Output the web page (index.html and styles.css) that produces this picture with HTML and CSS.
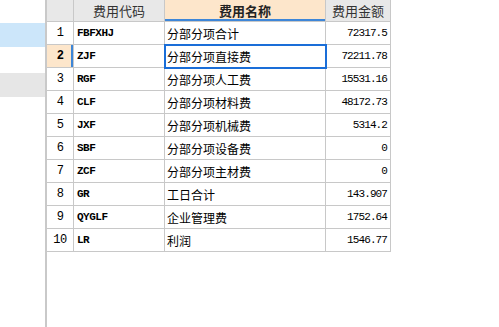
FILE: index.html
```html
<!DOCTYPE html>
<html>
<head>
<meta charset="utf-8">
<link rel="stylesheet" href="styles.css">
</head>
<body>
<div class="app">
  <div class="side">
    <div class="s-gap"></div>
    <div class="s-blue"></div>
    <div class="s-white"></div>
    <div class="s-gray"></div>
  </div>
  <div class="main">
    <div class="grid">
      <div class="c hd rn"></div>
      <div class="c hd">费用代码</div>
      <div class="c hd hd-sel">费用名称</div>
      <div class="c hd">费用金额</div>

      <div class="c rn">1</div><div class="c code">FBFXHJ</div><div class="c name">分部分项合计</div><div class="c num">72317.5</div>
      <div class="c rn rn-sel">2</div><div class="c code">ZJF</div><div class="c name sel">分部分项直接费</div><div class="c num">72211.78</div>
      <div class="c rn">3</div><div class="c code">RGF</div><div class="c name">分部分项人工费</div><div class="c num">15531.16</div>
      <div class="c rn">4</div><div class="c code">CLF</div><div class="c name">分部分项材料费</div><div class="c num">48172.73</div>
      <div class="c rn">5</div><div class="c code">JXF</div><div class="c name">分部分项机械费</div><div class="c num">5314.2</div>
      <div class="c rn">6</div><div class="c code">SBF</div><div class="c name">分部分项设备费</div><div class="c num">0</div>
      <div class="c rn">7</div><div class="c code">ZCF</div><div class="c name">分部分项主材费</div><div class="c num">0</div>
      <div class="c rn">8</div><div class="c code">GR</div><div class="c name">工日合计</div><div class="c num">143.907</div>
      <div class="c rn">9</div><div class="c code">QYGLF</div><div class="c name">企业管理费</div><div class="c num">1752.64</div>
      <div class="c rn">10</div><div class="c code">LR</div><div class="c name">利润</div><div class="c num">1546.77</div>
    </div>
  </div>
</div>
</body>
</html>
```
FILE: styles.css
```css
html, body {
  margin: 0;
  padding: 0;
  background: #ffffff;
}
body {
  width: 499px;
  height: 327px;
  overflow: hidden;
  font-family: "Noto Sans CJK SC", "Liberation Sans", sans-serif;
}
.app {
  display: flex;
  height: 327px;
}
.side {
  width: 45px;
  border-right: 2px solid #c9c9c9;
  display: flex;
  flex-direction: column;
  flex: none;
}
.s-gap { height: 23px; }
.s-blue { height: 24px; background: #cce6fa; }
.s-white { height: 26px; }
.s-gray { height: 24px; background: #e6e6e6; }
.main {
  flex: 1;
}
.grid {
  display: grid;
  grid-template-columns: 27px 91px 161px 65px;
  grid-template-rows: 22px repeat(10, 23px);
  width: 344px;
}
.c {
  border-right: 1px solid #c8c8c8;
  border-bottom: 1px solid #c8c8c8;
  box-sizing: border-box;
  display: flex;
  align-items: center;
  font-size: 12px;
  color: #000;
  white-space: nowrap;
  overflow: hidden;
}
.hd {
  background: #e8e8e8;
  justify-content: center;
  font-size: 13px;
  color: #333;
}
.hd-sel {
  background: #fde6cb;
  font-weight: bold;
  color: #222;
  box-shadow: inset 0 -2px 0 #3d86d8;
}
.rn {
  background: #ffffff;
  justify-content: center;
  font-family: "Liberation Mono", monospace;
  font-size: 12px;
  letter-spacing: -0.5px;
}
.hd.rn { background: #e8e8e8; }
.rn-sel {
  background: #fde6cb;
  box-shadow: inset -2px 0 0 #3d86d8;
  font-weight: bold;
}
.code {
  font-family: "Liberation Mono", monospace;
  font-weight: bold;
  font-size: 11px;
  letter-spacing: -0.5px;
  padding-left: 3px;
}
.name {
  padding-left: 2px;
}
.num {
  justify-content: flex-end;
  padding-right: 3px;
  font-family: "Liberation Mono", monospace;
  font-size: 11px;
  letter-spacing: -0.9px;
}
.sel {
  position: relative;
  z-index: 1;
  outline: 2px solid #1a6ed8;
  outline-offset: -1px;
}
```
